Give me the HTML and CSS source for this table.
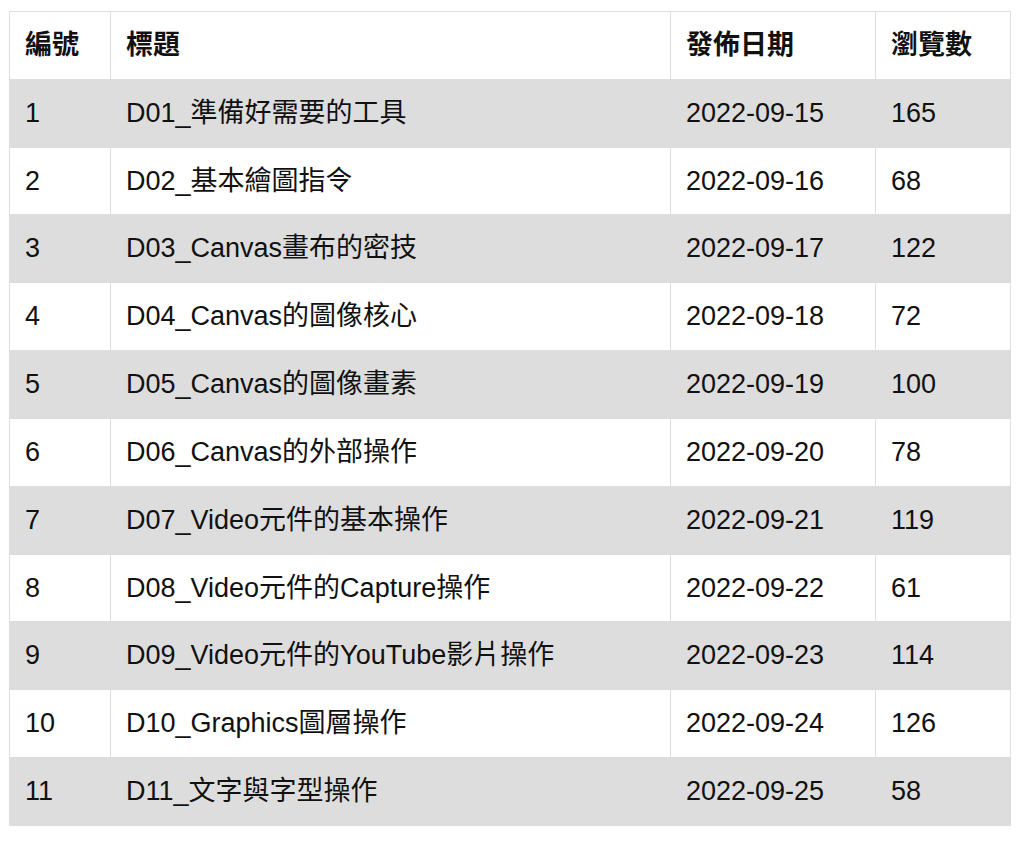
FILE: index.html
```html
<!DOCTYPE html>
<html lang="zh-Hant">
<head>
<meta charset="utf-8">
<title>文章列表</title>
<link rel="stylesheet" href="styles.css">
</head>
<body>
<table class="posts">
  <colgroup>
    <col class="c-id"><col class="c-title"><col class="c-date"><col class="c-views">
  </colgroup>
  <thead>
    <tr><th>編號</th><th>標題</th><th>發佈日期</th><th>瀏覽數</th></tr>
  </thead>
  <tbody>
    <tr><td>1</td><td>D01_準備好需要的工具</td><td>2022-09-15</td><td>165</td></tr>
    <tr><td>2</td><td>D02_基本繪圖指令</td><td>2022-09-16</td><td>68</td></tr>
    <tr><td>3</td><td>D03_Canvas畫布的密技</td><td>2022-09-17</td><td>122</td></tr>
    <tr><td>4</td><td>D04_Canvas的圖像核心</td><td>2022-09-18</td><td>72</td></tr>
    <tr><td>5</td><td>D05_Canvas的圖像畫素</td><td>2022-09-19</td><td>100</td></tr>
    <tr><td>6</td><td>D06_Canvas的外部操作</td><td>2022-09-20</td><td>78</td></tr>
    <tr><td>7</td><td>D07_Video元件的基本操作</td><td>2022-09-21</td><td>119</td></tr>
    <tr><td>8</td><td>D08_Video元件的Capture操作</td><td>2022-09-22</td><td>61</td></tr>
    <tr><td>9</td><td>D09_Video元件的YouTube影片操作</td><td>2022-09-23</td><td>114</td></tr>
    <tr><td>10</td><td>D10_Graphics圖層操作</td><td>2022-09-24</td><td>126</td></tr>
    <tr><td>11</td><td>D11_文字與字型操作</td><td>2022-09-25</td><td>58</td></tr>
  </tbody>
</table>
</body>
</html>
```
FILE: styles.css
```css
html, body {
  margin: 0;
  padding: 0;
  background: #fff;
}
body {
  padding: 11px 0 0 9px;
  font-family: "Liberation Sans", "Noto Sans CJK TC", Arial, sans-serif;
  color: #111;
}
.posts {
  border-collapse: collapse;
  width: 1001px;
  table-layout: fixed;
  font-size: 27px;
  line-height: 1.15;
}
.c-id { width: 101px; }
.c-title { width: 560px; }
.c-date { width: 205px; }
.c-views { width: 135px; }
.posts th,
.posts td {
  border: 1px solid #dedede;
  height: 66.83px;
  padding: 0 16px 0 15px;
  text-align: left;
  vertical-align: middle;
  white-space: nowrap;
}
.posts th {
  font-weight: bold;
}
.posts tbody tr:nth-child(odd) {
  background: #dddddd;
}
.posts tbody tr:nth-child(odd) td {
  border-color: #dddddd;
}
```
